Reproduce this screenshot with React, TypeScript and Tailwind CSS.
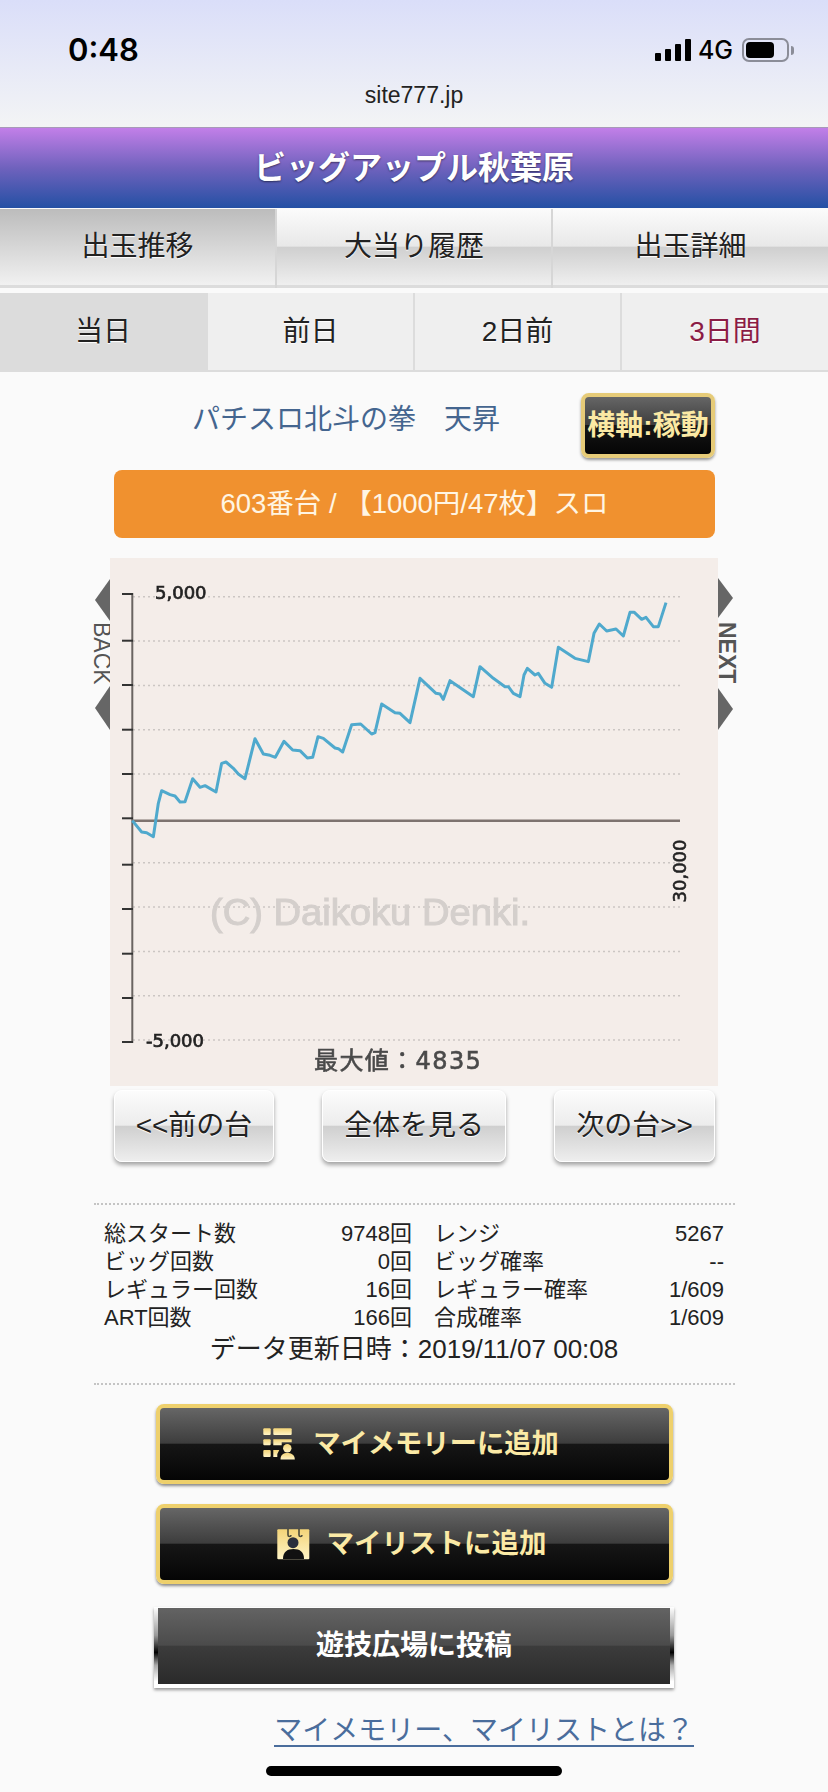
import React from "react";

const zoomA: [number, number][] = [
  [127,812],[155,846],[170,848],[190,860],[205,760],[215,722],[240,734],[255,738],[270,756],[285,755],[308,686],[330,712],[345,707],[378,726],[395,640],[408,636],[430,655],[445,672],[465,686],[495,566],[520,612],[540,616],[556,622],[582,574],[608,600],[630,602],[652,624],[668,622],[684,560],[700,565],[735,594],[745,596],[758,606],[785,524],[812,522],[845,552],[855,548],[875,462],[915,488],[930,490],[960,518],
];
const zoomB: [number, number][] = [
  [30,385],[78,430],[90,432],[100,448],[120,392],[190,440],[210,350],[250,385],[285,410],[295,410],[310,430],[330,440],[342,375],[352,355],[375,375],[385,370],[405,400],[425,412],[445,292],[495,325],[535,335],[552,250],[568,222],[590,243],[618,237],[640,258],[660,187],[673,187],[695,208],[708,202],[730,230],[745,230],[768,158],
];
const linePoints = [
  ...zoomA.map(([x, y]) => `${90 + x / 3},${550 + y / 3}`),
  ...zoomB.map(([x, y]) => `${410 + x / 3},${550 + y / 3}`),
].join(" ");

const gridYs = [596.7, 641, 685.5, 729.7, 774, 862.7, 907, 951.6, 995.7, 1040];
const tickYs = [594, 640.7, 685, 729.7, 774, 818.3, 864.7, 909, 953.7, 998, 1042];

function Chart() {
  const dejavu = "'DejaVu Sans','Noto Sans CJK JP',sans-serif";
  return (
    <svg width="608" height="528" viewBox="110 558 608 528" className="block bg-[#f4ede9] blur-[0.4px]">
      {gridYs.map((y) => (
        <line key={y} x1="133" x2="680" y1={y} y2={y} stroke="#cbc6c3" strokeWidth="1.5" strokeDasharray="2 3" />
      ))}
      <text x="210" y="925" fontSize="36" fill="#d4cfcc" textLength="320" lengthAdjust="spacingAndGlyphs" fontFamily="'Liberation Sans',sans-serif" stroke="#d4cfcc" strokeWidth="1">(C) Daikoku Denki.</text>
      <line x1="132.3" x2="132.3" y1="593" y2="1043" stroke="#6a6461" strokeWidth="2" />
      {tickYs.map((y) => (
        <line key={y} x1="122" x2="133" y1={y} y2={y} stroke="#333" strokeWidth="2" />
      ))}
      <line x1="132" x2="680" y1="820.7" y2="820.7" stroke="#7d736f" strokeWidth="2.5" />
      <polyline points={linePoints} fill="none" stroke="#4fa9cd" strokeWidth="3" strokeLinejoin="round" />
      <text x="155" y="599" fontSize="18" fill="#222" fontFamily={dejavu} stroke="#222" strokeWidth="0.7">5,000</text>
      <text x="146" y="1047" fontSize="18" fill="#222" fontFamily={dejavu} stroke="#222" strokeWidth="0.7">-5,000</text>
      <text x="0" y="0" fontSize="18" fill="#222" fontFamily={dejavu} stroke="#222" strokeWidth="0.6" textAnchor="middle" transform="translate(686 871) rotate(-90)">30,000</text>
      <text x="314" y="1069" fontSize="24" letterSpacing="1.4" fill="#4a4a4a" fontFamily={dejavu} stroke="#4a4a4a" strokeWidth="0.6">最大値：4835</text>
    </svg>
  );
}

function Tri({ dir, h }: { dir: "l" | "r"; h: number }) {
  return (
    <svg width="15" height={h} viewBox={`0 0 15 ${h}`} className="block">
      <polygon points={dir === "l" ? `15,0 0,${h / 2} 15,${h}` : `0,0 15,${h / 2} 0,${h}`} fill="#666" />
    </svg>
  );
}

function MainTab({ label, active, w }: { label: string; active?: boolean; w: string }) {
  return (
    <div
      className={
        w +
        (active
          ? " flex items-center justify-center h-[79px] text-[28px] text-[#222] border-b-[3px] border-b-[#dcdcdc] bg-[linear-gradient(to_bottom,#bcbcbc,#f1f1f1)] [text-shadow:0_1px_1px_#fff]"
          : " flex items-center justify-center h-[79px] text-[28px] text-[#222] border-b-[3px] border-b-[#dcdcdc] bg-[linear-gradient(to_bottom,#fbfbfb,#e8e8e8_49%,#cfcfcf_50%,#efefef)] [text-shadow:0_1px_1px_#fff]")
      }
    >
      {label}
    </div>
  );
}

function DayTab({ label, active, red, w }: { label: string; active?: boolean; red?: boolean; w: string }) {
  return (
    <div
      className={
        w +
        " flex items-center justify-center h-[79px] text-[28px] border-b-2 border-b-[#dcdcdc] [text-shadow:0_1px_1px_#fff] " +
        (active ? "bg-[#dcdcdc] " : "bg-[#efefef] ") +
        (red ? "text-[#8b1c45]" : "text-[#222]")
      }
    >
      {label}
    </div>
  );
}

function SmallBtn({ label, w }: { label: string; w: string }) {
  return (
    <div
      className={
        w +
        " h-[72px] rounded-[8px] flex items-center justify-center text-[28px] text-[#222] border border-white bg-[linear-gradient(to_bottom,#fcfcfc,#ececec_49%,#cfcfcf_50%,#eeeeee)] shadow-[0_3px_4px_rgba(0,0,0,0.35)] [text-shadow:0_1px_1px_#fff]"
      }
    >
      {label}
    </div>
  );
}

function Stat({ a, b, c, d }: { a: string; b: string; c: string; d: string }) {
  return (
    <div className="flex h-[28px] items-center text-[22px] text-[#222] leading-none">
      <div className="w-[308px] flex justify-between">
        <span>{a}</span>
        <span>{b}</span>
      </div>
      <div className="ml-[22px] flex-1 flex justify-between">
        <span>{c}</span>
        <span>{d}</span>
      </div>
    </div>
  );
}

function GoldGrad({ id }: { id: string }) {
  return (
    <defs>
      <linearGradient id={id} x1="0" x2="0" y1="0" y2="1">
        <stop offset="0" stopColor="#f3d478" />
        <stop offset="1" stopColor="#fff4c6" />
      </linearGradient>
    </defs>
  );
}

function MemoryIcon() {
  return (
    <svg width="32" height="32" viewBox="0 0 32 32" className="block">
      <GoldGrad id="gm" />
      <g fill="url(#gm)">
        <rect x="0.3" y="0.3" width="7.4" height="6.7" rx="1" />
        <rect x="10.3" y="0.3" width="18.4" height="6.7" rx="1" />
        <rect x="0.3" y="11.3" width="7.4" height="6" rx="1" />
        <path d="M10.3 11.3h18.4v3h-10v3h-8.4z" />
        <rect x="0.3" y="22" width="7.4" height="7" rx="1" />
        <path d="M10.3 22h6l-2 4v3h-4z" />
        <circle cx="24.3" cy="20.3" r="4.2" />
        <path d="M17.5 31.5c0-5 3-6.5 6.8-6.5s7.5 1.500 7.500 6.500z" />
      </g>
    </svg>
  );
}

function ListIcon() {
  return (
    <svg width="33" height="31" viewBox="0 0 33 31" className="block">
      <GoldGrad id="gl" />
      <rect x="0.3" y="0.3" width="32" height="30" rx="1" fill="url(#gl)" />
      <path d="M11 0v6c0 2 3 2 3 0M22 0v6c0 2 3 2 3 0" fill="none" stroke="#4a4a3a" strokeWidth="1.6" />
      <circle cx="16" cy="13.700" r="5.500" fill="#2b2f3c" />
      <path d="M6 30c0-7 4-10 10.500-10S27 23 27 30z" fill="#111" />
    </svg>
  );
}

function GoldBtn({ children, className }: { children: React.ReactNode; className?: string }) {
  return (
    <div
      className={
        "w-[517px] h-[80px] ml-[156px] rounded-[8px] border-[4px] border-[#eed06c] shadow-[0_2px_3px_rgba(0,0,0,0.45)] flex items-center justify-center bg-[linear-gradient(to_bottom,#666666,#3d3d3d_49%,#161616_50%,#050505)] " +
        (className ?? "")
      }
    >
      {children}
    </div>
  );
}

export default function App() {
  return (
    <div className="w-[828px] h-[1792px] overflow-hidden flex flex-col bg-[#fafafa] [font-family:'Liberation_Sans','Noto_Sans_CJK_JP',sans-serif]">
      {/* status bar + url */}
      <div className="h-[127px] shrink-0 bg-[linear-gradient(to_bottom,#dadef9,#f3f4f5)] pt-[29px] flex flex-col">
        <div className="h-[40px] flex items-center justify-between pl-[68px] pr-[34px] text-black [font-family:Inter,sans-serif]">
          <span className="text-[31px] font-semibold leading-none">0:48</span>
          <div className="flex items-center pt-[2px]">
            <div className="flex items-end gap-[4px] h-[22px]">
              <div className="w-[6px] h-[8px] rounded-[1px] bg-black" />
              <div className="w-[6px] h-[12px] rounded-[1px] bg-black" />
              <div className="w-[6px] h-[17px] rounded-[1px] bg-black" />
              <div className="w-[6px] h-[22px] rounded-[1px] bg-black" />
            </div>
            <span className="ml-[7px] text-[25px] font-medium leading-none">4G</span>
            <div className="ml-[9px] w-[47px] h-[24px] rounded-[7px] border-2 border-[#8b8d98] p-[2px] pr-[13px]">
              <div className="w-full h-full rounded-[4px] bg-black" />
            </div>
            <div className="ml-[2px] w-[3px] h-[9px] rounded-r-[3px] bg-[#8b8d98]" />
          </div>
        </div>
        <div className="mt-[11px] h-[30px] flex items-center justify-center text-[23px] text-[#222]">site777.jp</div>
      </div>

      {/* header */}
      <div className="h-[81px] shrink-0 border-t border-[#a79ab8] bg-[linear-gradient(to_bottom,#c27fe8,#6f62bd_50%,#2450a4)] flex items-center justify-center text-white text-[32px] font-bold [text-shadow:0_1px_2px_rgba(0,0,0,0.5)]">
        ビッグアップル秋葉原
      </div>

      {/* tabs */}
      <div className="mt-[1px] flex shrink-0 gap-[2px] bg-[#d6d6d6]">
        <MainTab label="出玉推移" active w="w-[275px]" />
        <MainTab label="大当り履歴" w="w-[274px]" />
        <MainTab label="出玉詳細" w="flex-1" />
      </div>
      <div className="mt-[5px] flex shrink-0 gap-[2px] bg-[#dcdcdc]">
        <DayTab label="当日" active w="w-[206px]" />
        <DayTab label="前日" w="w-[205px]" />
        <DayTab label="2日前" w="w-[205px]" />
        <DayTab label="3日間" red w="flex-1" />
      </div>

      {/* title row */}
      <div className="mt-[21px] h-[65px] shrink-0 flex items-center pl-[192px] pr-[113px]">
        <span className="text-[28px] text-[#44658f] leading-none -mt-[11px]">パチスロ北斗の拳　天昇</span>
        <div className="ml-auto w-[134px] h-[65px] rounded-[8px] border-[4px] border-[#e6cb78] shadow-[0_2px_3px_rgba(0,0,0,0.4)] flex items-center justify-center text-[#fbe9a4] text-[28px] font-bold leading-none whitespace-nowrap bg-[linear-gradient(to_bottom,#666666,#3d3d3d_49%,#161616_50%,#050505)]">
          横軸:稼動
        </div>
      </div>

      {/* orange bar */}
      <div className="mt-[12px] ml-[114px] mr-[113px] h-[68px] shrink-0 rounded-[8px] bg-[#f0912f] flex items-center justify-center text-[27.500px] text-[#fff5e3]">
        603番台 / 【1000円/47枚】スロ
      </div>

      {/* chart row */}
      <div className="mt-[20px] h-[528px] shrink-0 flex justify-center">
        <div className="w-[17px] flex flex-col items-end pt-[21px]">
          <Tri dir="l" h={42} />
          <div className="h-[65px] w-[17px] flex items-center justify-center [writing-mode:vertical-rl] text-[23px] leading-none text-[#555]">BACK</div>
          <Tri dir="l" h={44} />
        </div>
        <Chart />
        <div className="w-[17px] flex flex-col items-start pt-[20px]">
          <Tri dir="r" h={40} />
          <div className="h-[70px] w-[16px] flex items-center justify-center [writing-mode:vertical-rl] text-[23px] leading-none text-[#555] font-bold">NEXT</div>
          <Tri dir="r" h={42} />
        </div>
      </div>

      {/* nav buttons */}
      <div className="mt-[4px] pl-[114px] pr-[113px] flex justify-between shrink-0">
        <SmallBtn label="<<前の台" w="w-[160px]" />
        <SmallBtn label="全体を見る" w="w-[184px]" />
        <SmallBtn label="次の台>>" w="w-[161px]" />
      </div>

      {/* stats */}
      <div className="mt-[41px] ml-[94px] mr-[93px] border-t-2 border-dotted border-[#c4c4c4] shrink-0" />
      <div className="mt-[15px] pl-[104px] pr-[104px] shrink-0">
        <Stat a="総スタート数" b="9748回" c="レンジ" d="5267" />
        <Stat a="ビッグ回数" b="0回" c="ビッグ確率" d="--" />
        <Stat a="レギュラー回数" b="16回" c="レギュラー確率" d="1/609" />
        <Stat a="ART回数" b="166回" c="合成確率" d="1/609" />
      </div>
      <div className="h-[34px] shrink-0 flex items-center justify-center text-[26px] text-[#222] leading-none">
        データ更新日時：2019/11/07 00:08
      </div>
      <div className="mt-[17px] ml-[94px] mr-[93px] border-t-2 border-dotted border-[#c4c4c4] shrink-0" />

      {/* gold buttons */}
      <GoldBtn className="mt-[19px] shrink-0 pr-[7px]">
        <MemoryIcon />
        <span className="ml-[18px] text-[27.300px] font-bold text-[#fbeaa6] leading-none">マイメモリーに追加</span>
      </GoldBtn>
      <GoldBtn className="mt-[20px] shrink-0 pr-[6px]">
        <ListIcon />
        <span className="ml-[17px] text-[27.500px] font-bold text-[#fbeaa6] leading-none">マイリストに追加</span>
      </GoldBtn>

      <div className="mt-[23px] ml-[154px] w-[520px] h-[81px] shrink-0 px-[4px] pt-[1px] pb-[4px] bg-[linear-gradient(to_bottom,#ffffff,#999999_35%,#000000_56%,#aaaaaa_72%,#ffffff_92%)] shadow-[0_2px_3px_rgba(0,0,0,0.4)]">
        <div className="h-full flex items-center justify-center text-white text-[28px] font-bold bg-[linear-gradient(to_bottom,#636363,#4b4b4b_49%,#3c3c3c_50%,#2a2a2a)]">
          遊技広場に投稿
        </div>
      </div>

      {/* link */}
      <div className="mt-[29px] flex justify-end pr-[134px] shrink-0">
        <span className="text-[28px] leading-none border-b-2 border-[#4a6d9c] text-[#4a6d9c]">マイメモリー、マイリストとは？</span>
      </div>

      {/* home indicator */}
      <div className="mt-[19px] ml-[266px] w-[296px] h-[10px] rounded-full bg-black shrink-0" />
    </div>
  );
}
